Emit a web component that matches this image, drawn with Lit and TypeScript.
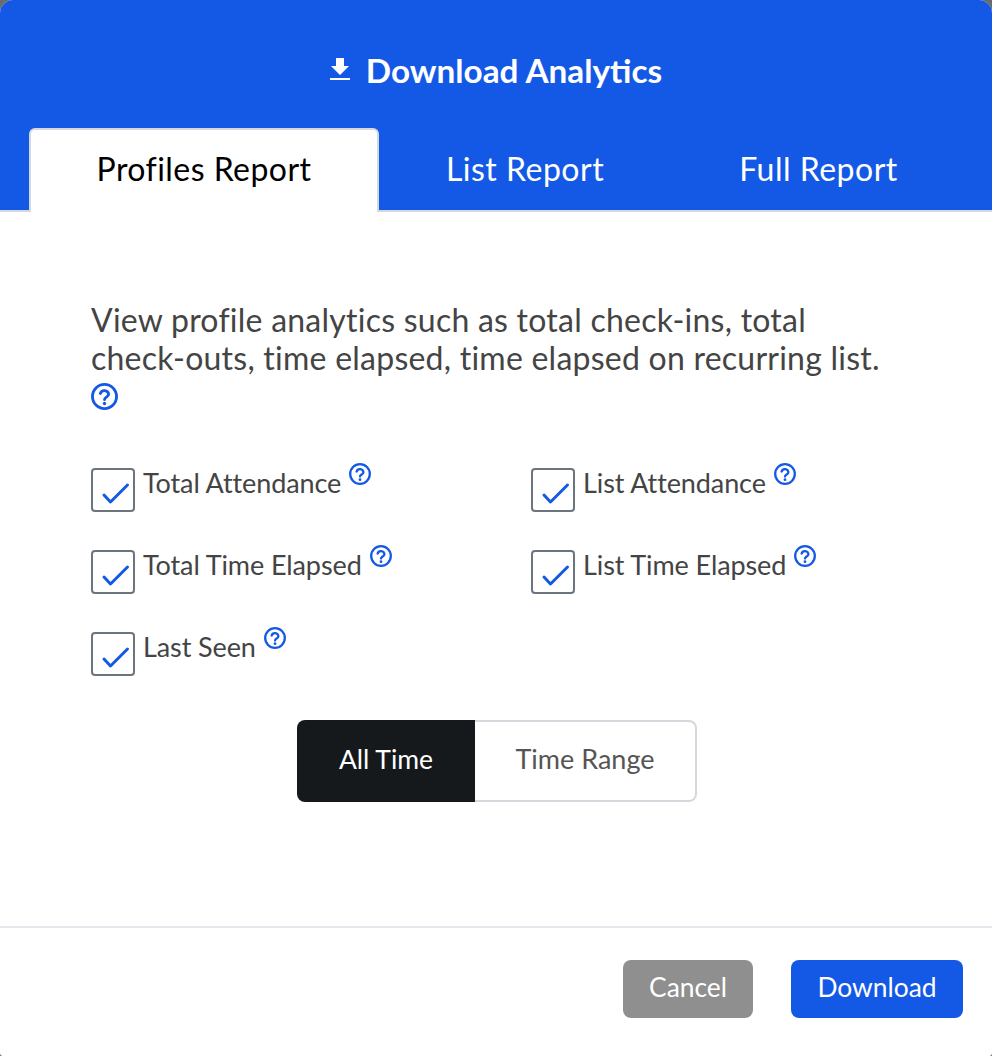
import { LitElement, html, css, svg } from "lit";
import { customElement, state } from "lit/decorators.js";

const helpIcon = svg`
  <circle cx="12" cy="12" r="10.7" fill="none" stroke="currentColor" stroke-width="2.5"></circle>
  <path d="M8.300 9.300a3.800 3.700 0 0 1 7.400.7c0 2.500-3.700 2.600-3.700 4.800" fill="none" stroke="currentColor" stroke-width="2.500" stroke-linecap="round"></path>
  <circle cx="12" cy="18.200" r="1.500" fill="currentColor"></circle>
`;

const CHECKS = [
  ["Total Attendance", "List Attendance"],
  ["Total Time Elapsed", "List Time Elapsed"],
  ["Last Seen", ""],
];

@customElement("app-root")
export class AppRoot extends LitElement {
  static styles = css`
    :host {
      display: block;
      width: 992px;
      height: 1056px;
      background: #6b6b6b;
      font-family: "Lato", "Liberation Sans", sans-serif;
      color: #444;
    }
    .modal {
      height: 1056px;
      display: flex;
      flex-direction: column;
      background: #fff;
      border-radius: 13px 13px 3px 3px;
      overflow: hidden;
    }
    .header {
      background: #1459e6;
      height: 210px;
      display: flex;
      flex-direction: column;
      border-bottom: 2px solid #d5d8dc;
      box-sizing: content-box;
    }
    .title {
      height: 128px;
      padding-top: 49px;
      box-sizing: border-box;
      display: flex;
      justify-content: center;
      gap: 16px;
      color: #fff;
      font-size: 33.3px;
      line-height: 42px;
      font-weight: 700;
    }
    .title svg {
      width: 20px;
      height: 24px;
      margin-top: 8px;
    }
    .tabs {
      display: flex;
      height: 84px;
      padding-left: 29px;
      margin-bottom: -2px;
    }
    .tab {
      display: flex;
      align-items: center;
      justify-content: center;
      padding-bottom: 4px;
      box-sizing: border-box;
      font-size: 32px;
      letter-spacing: 0.5px;
      color: #fff;
    }
    .tab.active {
      width: 350px;
      padding-bottom: 5px;
      letter-spacing: 0.45px;
      background: #fff;
      color: #000;
      border: 2px solid #d5d8dc;
      border-bottom: 0;
      border-radius: 6px 6px 0 0;
    }
    .tab.list {
      width: 294px;
      padding-right: 2px;
    }
    .tab.full {
      width: 293px;
      padding-right: 2px;
    }
    .body {
      flex: 1;
      padding: 89px 91px 0;
    }
    .intro {
      margin: 0;
      font-size: 32px;
      letter-spacing: 0.24px;
      line-height: 38px;
      color: #444;
    }
    .help {
      color: #1459e6;
      display: block;
    }
    .help.big {
      width: 27px;
      height: 27px;
      margin-top: 6px;
    }
    .help.small {
      width: 22px;
      height: 22px;
      margin: -5px 0 0 8px;
      flex: none;
    }
    .grid {
      display: grid;
      grid-template-columns: 440px 1fr;
      grid-auto-rows: 82px;
      margin-top: 58px;
    }
    .check {
      display: flex;
      align-items: flex-start;
    }
    .box {
      width: 44px;
      height: 44px;
      box-sizing: border-box;
      border: 2px solid #6c757d;
      border-radius: 4px;
      margin-right: 8px;
      flex: none;
    }
    .box svg {
      display: block;
      width: 40px;
      height: 40px;
    }
    .label {
      font-size: 27px;
      letter-spacing: -0.1px;
      line-height: 30px;
      color: #444;
    }
    .range {
      display: flex;
      justify-content: center;
      margin: 6px 0 0 2px;
    }
    .range div {
      height: 82px;
      padding-bottom: 6px;
      box-sizing: border-box;
      display: flex;
      align-items: center;
      justify-content: center;
      font-size: 27px;
    }
    .range .on {
      width: 178px;
      padding-bottom: 4px;
      background: #16191c;
      color: #fff;
      font-size: 26.5px;
      border-radius: 8px 0 0 8px;
    }
    .range .off {
      width: 222px;
      color: #555;
      border: 2px solid #d5d8dc;
      border-left: 0;
      border-radius: 0 8px 8px 0;
    }
    .footer {
      height: 130px;
      box-sizing: border-box;
      border-top: 2px solid #e6e6ec;
      display: flex;
      justify-content: flex-end;
      gap: 38px;
      padding: 32px 29px 0 0;
    }
    .btn {
      height: 58px;
      padding-bottom: 4px;
      box-sizing: border-box;
      border-radius: 8px;
      color: #fff;
      font-size: 26.4px;
      display: flex;
      align-items: center;
      justify-content: center;
    }
    .cancel {
      width: 130px;
      background: #8f8f8f;
    }
    .download {
      width: 172px;
      background: #1459e6;
    }
  `;

  @state() private activeRange = "All Time";

  private renderCheck(label: string) {
    if (!label) return html`<div></div>`;
    return html`
      <div class="check">
        <div class="box">
          <svg viewBox="0 0 40 40">
            <path d="M11 25l6.500 7L34.500 15" fill="none" stroke="#1459e6" stroke-width="3" stroke-linecap="round" stroke-linejoin="round"></path>
          </svg>
        </div>
        <span class="label">${label}</span>
        <svg class="help small" viewBox="0 0 24 24">${helpIcon}</svg>
      </div>
    `;
  }

  render() {
    return html`
      <div class="modal">
        <div class="header">
          <div class="title">
            <svg viewBox="0 0 20 24">
              <path d="M6 1h8v8h5l-9 9-9-9h5z M0 21h20v2H0z" fill="#fff"></path>
            </svg>
            <span>Download Analytics</span>
          </div>
          <div class="tabs">
            <div class="tab active">Profiles Report</div>
            <div class="tab list">List Report</div>
            <div class="tab full">Full Report</div>
          </div>
        </div>
        <div class="body">
          <p class="intro">View profile analytics such as total check-ins, total check-outs, time elapsed, time elapsed on recurring list.</p>
          <svg class="help big" viewBox="0 0 24 24">${helpIcon}</svg>
          <div class="grid">
            ${CHECKS.flat().map((label) => this.renderCheck(label))}
          </div>
          <div class="range">
            <div class="on">${this.activeRange}</div>
            <div class="off">Time Range</div>
          </div>
        </div>
        <div class="footer">
          <div class="btn cancel">Cancel</div>
          <div class="btn download">Download</div>
        </div>
      </div>
    `;
  }
}
